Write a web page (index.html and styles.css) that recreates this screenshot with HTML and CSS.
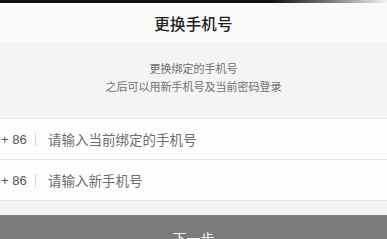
FILE: index.html
```html
<!DOCTYPE html>
<html lang="zh-CN">
<head>
    <meta charset="UTF-8">
    <meta name="viewport" content="width=device-width, initial-scale=1.0">
    <title>更换手机号</title>
    <link rel="stylesheet" href="styles.css">
</head>
<body>
    <div class="status-bar"></div>
    <div class="header">
        <h1>更换手机号</h1>
    </div>

    <div class="intro">
        <p>更换绑定的手机号</p>
        <p>之后可以用新手机号及当前密码登录</p>
    </div>

    <div class="form">
        <div class="row">
            <span class="code">+ 86</span>
            <span class="divider"></span>
            <span class="placeholder">请输入当前绑定的手机号</span>
        </div>
        <div class="row">
            <span class="code">+ 86</span>
            <span class="divider"></span>
            <span class="placeholder">请输入新手机号</span>
        </div>
    </div>

    <div class="next-btn">下一步</div>
</body>
</html>
```

FILE: styles.css
```css
body {
    font-family: "Noto Sans CJK SC", "Noto Sans", sans-serif;
    background-color: #f4f4f4;
    margin: 0;
    padding: 0;
    height: 239px;
    overflow: hidden;
}

.status-bar {
    height: 3px;
    background: linear-gradient(90deg, #111 0%, #111 70%, #777 85%, #f4f4f4 100%);
}

.header {
    height: 39px;
    background-color: #fafafa;
    display: flex;
    align-items: center;
    justify-content: center;
}

.header h1 {
    margin: 0;
    font-size: 15.5px;
    font-weight: 500;
    color: #1e1e1e;
    letter-spacing: 0.2px;
}

.intro {
    padding-top: 17px;
    height: 76px;
    text-align: center;
    box-sizing: border-box;
}

.intro p {
    margin: 0;
    font-size: 11px;
    line-height: 18px;
    color: #707070;
}

.form {
    background-color: #fdfdfd;
    border-top: 1px solid #e8e8e8;
    border-bottom: 1px solid #e8e8e8;
}

.row {
    height: 40px;
    display: flex;
    align-items: center;
    padding-left: 1px;
}

.row + .row {
    border-top: 1px solid #e4e4e4;
}

.code {
    font-family: "Liberation Sans", sans-serif;
    font-size: 13px;
    color: #555;
    width: 34px;
}

.divider {
    width: 1px;
    height: 13px;
    background-color: #d8d8d8;
    margin-right: 12px;
}

.placeholder {
    font-size: 13.5px;
    color: #6e6e6e;
}

.next-btn {
    margin-top: 14px;
    height: 30px;
    background-color: #7b7b7b;
    color: #f2f2f2;
    font-size: 14px;
    text-align: center;
    line-height: 46px;
}
```
